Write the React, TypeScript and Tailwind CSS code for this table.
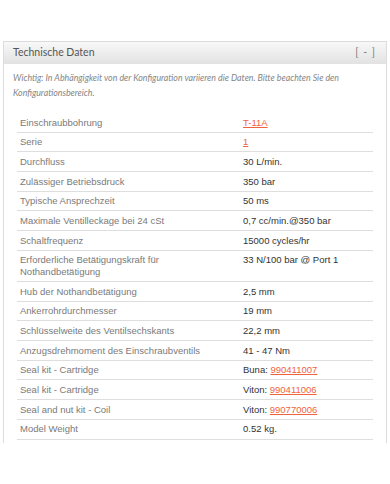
// Produktdetail: Technische Daten (aufklappbares Panel)

type Spec = {
  label: string;
  value?: string;
  prefix?: string;
  link?: string;
};

const SPECS: Spec[] = [
  { label: 'Einschraubbohrung', link: 'T-11A' },
  { label: 'Serie', link: '1' },
  { label: 'Durchfluss', value: '30 L/min.' },
  { label: 'Zulässiger Betriebsdruck', value: '350 bar' },
  { label: 'Typische Ansprechzeit', value: '50 ms' },
  { label: 'Maximale Ventilleckage bei 24 cSt', value: '0,7 cc/min.@350 bar' },
  { label: 'Schaltfrequenz', value: '15000 cycles/hr' },
  { label: 'Erforderliche Betätigungskraft für Nothandbetätigung', value: '33 N/100 bar @ Port 1' },
  { label: 'Hub der Nothandbetätigung', value: '2,5 mm' },
  { label: 'Ankerrohrdurchmesser', value: '19 mm' },
  { label: 'Schlüsselweite des Ventilsechskants', value: '22,2 mm' },
  { label: 'Anzugsdrehmoment des Einschraubventils', value: '41 - 47 Nm' },
  { label: 'Seal kit - Cartridge', prefix: 'Buna: ', link: '990411007' },
  { label: 'Seal kit - Cartridge', prefix: 'Viton: ', link: '990411006' },
  { label: 'Seal and nut kit - Coil', prefix: 'Viton: ', link: '990770006' },
  { label: 'Model Weight', value: '0.52 kg.' },
];

function SpecRow({ spec }: { spec: Spec }) {
  return (
    <div className="grid grid-cols-[223px_1fr] border-b border-[#dedede] text-[9.5px] leading-[11.5px]">
      <div className="py-[3.6px] pl-[3px] pr-3 text-[#7a7a7a]">{spec.label}</div>
      <div className="py-[3.6px] pl-[3px] text-[#333]">
        {spec.prefix}
        {spec.value}
        {spec.link && (
          <a href="#" className="text-[#ef6440] underline underline-offset-1">
            {spec.link}
          </a>
        )}
      </div>
    </div>
  );
}

export default function App() {
  return (
    <div className="w-[390px] h-[484px] bg-white pt-[41px] px-[3px]">
      <div className="border-x border-t border-[#dcdcdc] h-[402px]">
        {/* Kopfzeile */}
        <div className="h-[22px] flex items-center justify-between pl-[9px] pr-[10px] bg-gradient-to-b from-[#f8f8f8] to-[#e2e2e2] font-['Lato',sans-serif] text-[10.5px] text-[#555]">
          <span>Technische Daten</span>
          <span className="text-[#7d7d7d] tracking-[1px]">[ - ]</span>
        </div>

        <div className="px-[9px]">
          <p className="pt-[6px] font-['Lato',sans-serif] italic text-[8.8px] leading-[15px] text-[#858585]">
            Wichtig: In Abhängigkeit von der Konfiguration variieren die Daten. Bitte beachten Sie den
            <br />
            Konfigurationsbereich.
          </p>

          {/* Datentabelle */}
          <div className="mt-[13px] mx-[4px] font-['Liberation_Sans',Arial,sans-serif]">
            {SPECS.map((spec, i) => (
              <SpecRow key={i} spec={spec} />
            ))}
          </div>
        </div>
      </div>
    </div>
  );
}
